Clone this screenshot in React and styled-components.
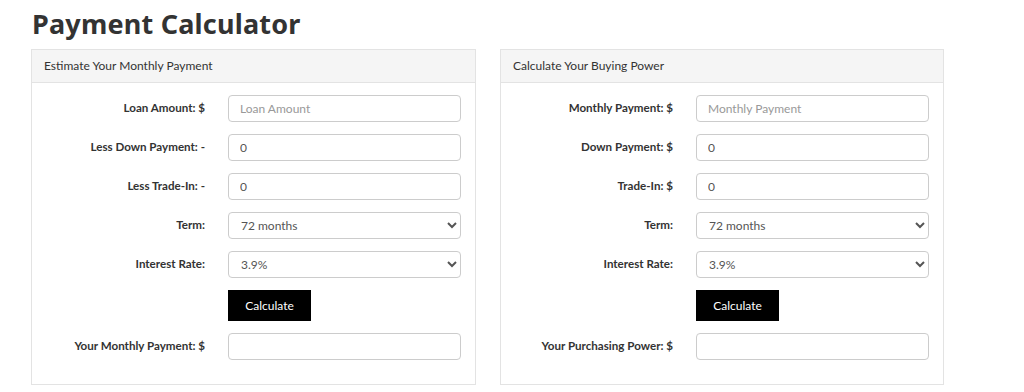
import styled, { createGlobalStyle } from "styled-components";

const GlobalStyle = createGlobalStyle`
  body {
    margin: 0;
    background: #fff;
    font-family: Lato, "Liberation Sans", sans-serif;
    color: #333;
  }
`;

const Page = styled.div`
  padding: 6px 0 0 31px;
  width: 912px;
`;

const Title = styled.h1`
  margin: 0 0 8px 1px;
  font-family: "Noto Sans", "Liberation Sans", sans-serif;
  font-size: 27px;
  line-height: 35px;
  font-weight: 700;
  color: #333;
  letter-spacing: 0.2px;
`;

const Panels = styled.div`
  display: grid;
  grid-template-columns: 445px 444px;
  column-gap: 24px;
`;

const Panel = styled.div`
  border: 1px solid #e3e3e3;
  background: #fff;
`;

const PanelHead = styled.div`
  background: #f5f5f5;
  border-bottom: 1px solid #e3e3e3;
  height: 33px;
  display: flex;
  align-items: center;
  padding: 0 0 2px 12px;
  box-sizing: border-box;
  font-size: 12px;
  color: #333;
`;

const PanelBody = styled.div`
  display: grid;
  grid-template-columns: 1fr 233px;
  column-gap: 23px;
  row-gap: 12px;
  padding: 12px 14px 24px 15px;
  align-items: center;
`;

const Label = styled.label`
  text-align: right;
  font-size: 11.6px;
  font-weight: 700;
  color: #333;
  padding-bottom: 2px;
`;

const fieldCss = `
  box-sizing: border-box;
  width: 100%;
  height: 27px;
  border: 1px solid #ccc;
  border-radius: 4px;
  background: #fff;
  font-family: Lato, "Liberation Sans", sans-serif;
  font-size: 12px;
  color: #555;
  outline: none;
`;

const Input = styled.input`
  ${fieldCss}
  padding: 0 11px;
  &::placeholder {
    color: #999;
  }
`;

const Select = styled.select`
  ${fieldCss}
  padding: 0 8px;
`;

const Button = styled.button`
  grid-column: 2;
  justify-self: start;
  width: 83px;
  height: 31px;
  background: #000;
  color: #fff;
  border: none;
  font-family: Lato, "Liberation Sans", sans-serif;
  font-size: 12px;
  cursor: pointer;
`;

const Field = ({ label, value, placeholder }) => (
  <>
    <Label>{label}</Label>
    <Input defaultValue={value} placeholder={placeholder} />
  </>
);

const SelectField = ({ label, options, value }) => (
  <>
    <Label>{label}</Label>
    <Select defaultValue={value}>
      {options.map((o) => (
        <option key={o}>{o}</option>
      ))}
    </Select>
  </>
);

const terms = ["36 months", "48 months", "60 months", "72 months", "84 months"];
const rates = ["2.9%", "3.9%", "4.9%", "5.9%", "6.9%"];

const CalcPanel = ({ title, fields, resultLabel }) => (
  <Panel>
    <PanelHead>{title}</PanelHead>
    <PanelBody>
      {fields.map((f) => (
        <Field key={f.label} {...f} />
      ))}
      <SelectField label="Term:" options={terms} value="72 months" />
      <SelectField label="Interest Rate:" options={rates} value="3.9%" />
      <Button>Calculate</Button>
      <Field label={resultLabel} value="" />
    </PanelBody>
  </Panel>
);

export default function App() {
  return (
    <>
      <GlobalStyle />
      <Page>
        <Title>Payment Calculator</Title>
        <Panels>
          <CalcPanel
            title="Estimate Your Monthly Payment"
            fields={[
              { label: "Loan Amount: $", placeholder: "Loan Amount" },
              { label: "Less Down Payment: -", value: "0" },
              { label: "Less Trade-In: -", value: "0" },
            ]}
            resultLabel="Your Monthly Payment: $"
          />
          <CalcPanel
            title="Calculate Your Buying Power"
            fields={[
              { label: "Monthly Payment: $", placeholder: "Monthly Payment" },
              { label: "Down Payment: $", value: "0" },
              { label: "Trade-In: $", value: "0" },
            ]}
            resultLabel="Your Purchasing Power: $"
          />
        </Panels>
      </Page>
    </>
  );
}
